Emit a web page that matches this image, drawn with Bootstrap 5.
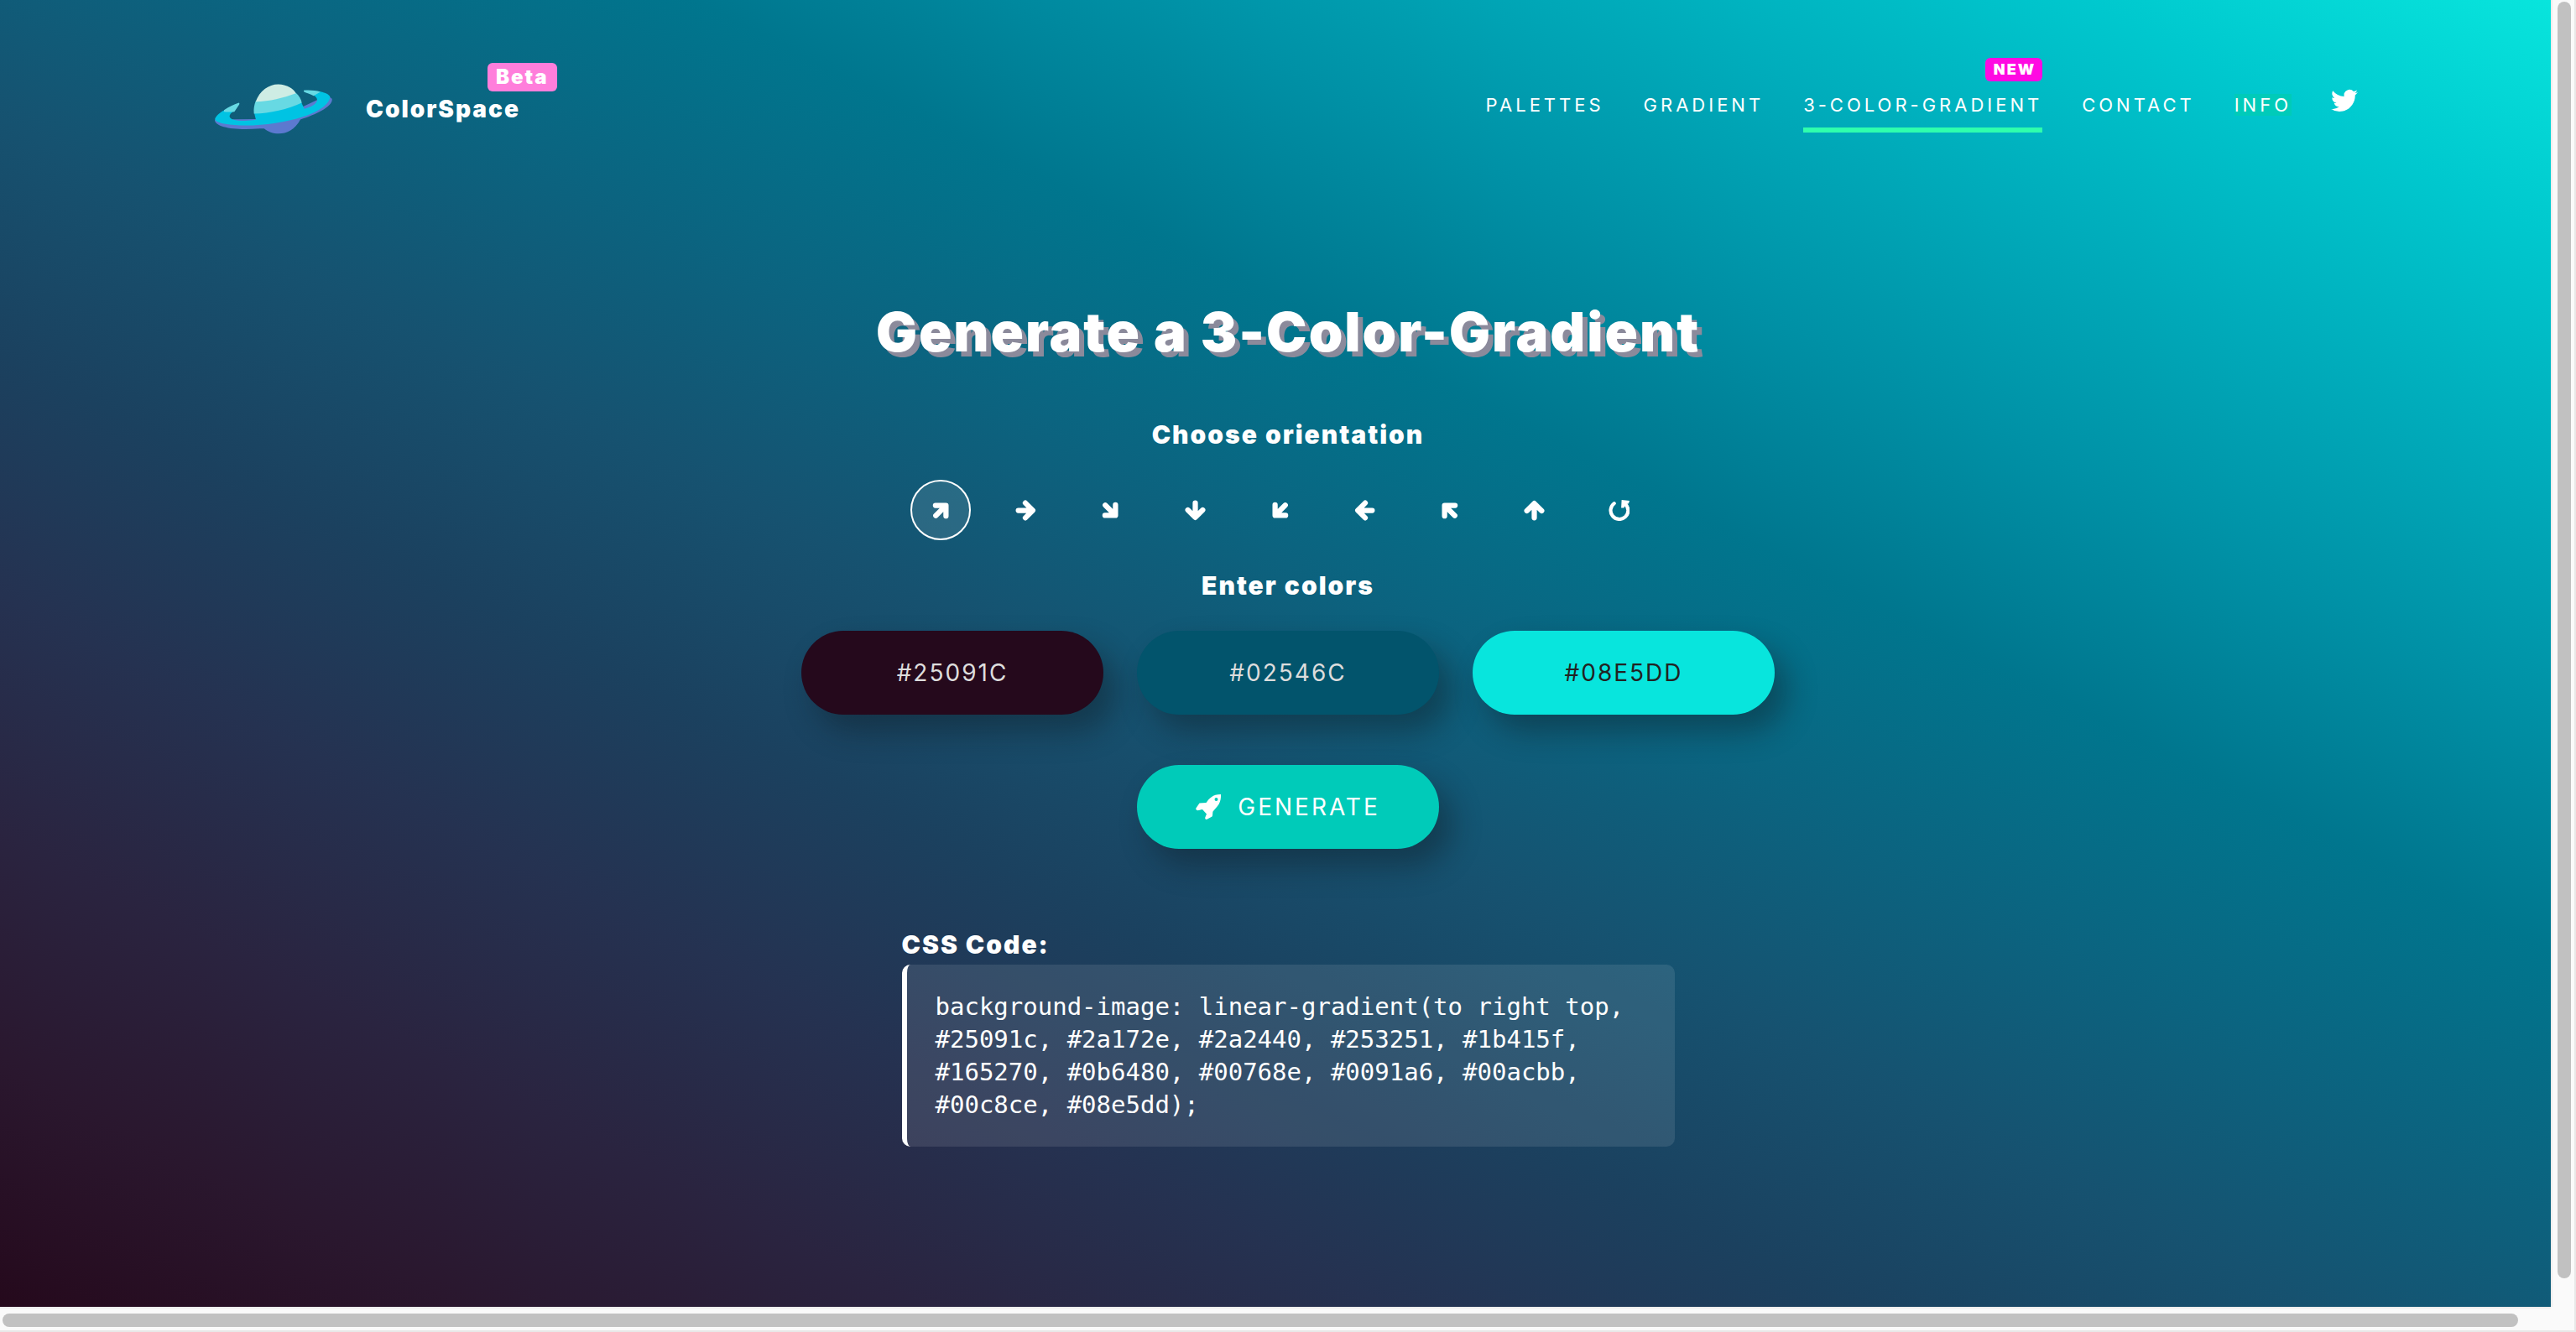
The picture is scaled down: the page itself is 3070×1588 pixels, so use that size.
<!DOCTYPE html>
<html lang="en">
<head>
<meta charset="utf-8">
<meta name="viewport" content="width=device-width, initial-scale=1">
<title>ColorSpace - 3-Color-Gradient Generator</title>
<link href="https://cdn.jsdelivr.net/npm/bootstrap@5.3.0/dist/css/bootstrap.min.css" rel="stylesheet">
<style>
body{font-family:Inter,"Open Sans",sans-serif;color:#fff;font-size:28px;letter-spacing:2px;background:#fafafa}
.frame{display:grid;grid-template:minmax(0,1fr) 30px/minmax(0,1fr) 30px;height:100vh}
.viewport{overflow:hidden;background-image:linear-gradient(to right top,#25091c,#2a172e,#2a2440,#253251,#1b415f,#165270,#0b6480,#00768e,#0091a6,#00acbb,#00c8ce,#08e5dd)}
.site{width:100vw}
.topbar{padding:100px 260px 0 256px;height:160px}
.brand{gap:40px;color:#fff;text-decoration:none;font-weight:900;line-height:40px}
.brand svg{width:140px;height:60px}
.brand .tag{left:145px;top:-35px;background:#ff7edb;border-radius:6px;font-size:24px;line-height:34px;padding:0 10px}
.menu{gap:47px;padding-top:12px;font-size:22px;letter-spacing:4px;line-height:26px}
.menu a{color:#fff;text-decoration:none}
.menu .current::after{content:"";position:absolute;left:0;right:0;top:40px;height:6px;background:#2fffad}
.menu .tag{right:0;top:-43px;background:#ff0ae2;border-radius:6px;font-size:18px;font-weight:900;letter-spacing:2px;line-height:28px;padding:0 8px 0 10px}
.menu .info{background:#00cbb9}
.menu svg{width:32px;height:26px;display:block;margin-top:-5px}
.title{font-size:65px;font-weight:900;line-height:80px;margin:196px 0 62px;text-shadow:6px 6px 0 #8b8a9b}
.sub{font-size:30px;font-weight:900;line-height:40px;margin:0}
.dirs{gap:29px;padding-right:20px;margin:34px 0}
.dir{width:72px;height:72px;border:2px solid transparent;border-radius:50%;background:none;padding:0}
.dir.on{border-color:#fff;background:rgba(255,255,255,.1)}
.dir svg{width:25px;height:25px;display:block;margin:auto}
.pill{width:360px;height:100px;border:0;border-radius:50px;text-align:center;letter-spacing:2px;box-shadow:15px 20px 35px rgba(15,20,25,.38)}
.swatches{gap:40px;margin:34px 0 60px}
.c1{background:#25091c;color:#ddd}
.c2{background:#02546c;color:#ddd}
.c3{background:#08e5dd;color:#222}
.go{background:#00cbb9;color:#fff;gap:20px;letter-spacing:3px}
.go svg{width:30px;height:30px}
.result{width:30vw;margin:94px auto 0}
.code{margin:4px 0 0;padding:31px 0 30px 34px;border-left:6px solid #fff;border-radius:10px;background:rgba(255,255,255,.1);background-clip:padding-box;font:29px/39px "DejaVu Sans Mono",monospace;letter-spacing:0;white-space:pre-wrap;overflow:hidden}
.vbar{background:#fafafa;border-left:2px solid #ececec;border-right:2px solid #e8e8e8;padding:2px 4px 34px 6px}
.hbar{background:#fafafa;border-top:2px solid #ececec;border-bottom:2px solid #e8e8e8;padding:6px 39px 4px 3px}
.nook{background:#fafafa;border-right:2px solid #e8e8e8;border-bottom:2px solid #e8e8e8}
.thumb{height:100%;background:#c1c1c1;border-radius:8px}
</style>
<script src="https://cdn.jsdelivr.net/npm/bootstrap@5.3.0/dist/js/bootstrap.bundle.min.js"></script>
</head>
<body>
<svg class="d-none" aria-hidden="true">
<symbol id="arrow" viewBox="0 0 24 24"><path d="M3.500 12H19M11.500 3.500 20 12l-8.500 8.500" fill="none" stroke="#fff" stroke-width="6" stroke-linecap="round" stroke-linejoin="round"/></symbol>
</svg>
<div class="frame">
<div class="viewport">
<div class="site">
<header class="topbar d-flex justify-content-between align-items-start">
<a class="brand d-flex align-items-center" href="#">
<svg viewBox="78 125 420 179" aria-hidden="true">
<path fill="#5c79cf" d="M78 252C76 280 150 292 240 284L254 284C285 310 350 316 384 252C440 235 502 205 497 178L480 165 300 250Z"/>
<path fill="#00c3e3" d="M79 248C85 235 100 224 113 218L146 222C128 233 126 245 140 251C160 258 200 258 225 253L219 229 387 190C390 198 395 206 398 214C425 207 440 197 444 184C444 175 440 170 430 165L455 152C475 156 486 162 490 170C489 200 440 228 390 243C330 262 250 275 170 273C110 270 76 262 79 248Z"/>
<path fill="#67d9e3" d="M111 218C128 207 145 198 164 192Q168 194 165 199L148 224Q128 226 111 224ZM396 148C415 146 438 148 456 153L431 167C420 160 405 157 396 152Z"/>
<path fill="#67d9e3" d="M224 187 368 157C380 168 387 180 389 192C340 215 275 230 218 231C216 215 219 200 224 187Z"/>
<path fill="#ceede4" d="M224 188C238 150 270 126 305 126C335 127 358 140 368 158C320 175 275 187 224 188Z"/>
</svg>
<span class="position-relative">ColorSpace<span class="tag position-absolute">Beta</span></span>
</a>
<nav class="menu d-flex" aria-label="Main">
<a href="#">PALETTES</a>
<a href="#">GRADIENT</a>
<a class="current position-relative" href="#">3-COLOR-GRADIENT<span class="tag position-absolute">NEW</span></a>
<a href="#">CONTACT</a>
<a class="info" href="#">INFO</a>
<a href="#" aria-label="Twitter"><svg viewBox="0 2 16 13" fill="#fff" overflow="visible"><path d="M5.026 15c6.038 0 9.341-5.003 9.341-9.334 0-.14 0-.282-.006-.422A6.685 6.685 0 0 0 16 3.542a6.658 6.658 0 0 1-1.889.518 3.301 3.301 0 0 0 1.447-1.817 6.533 6.533 0 0 1-2.087.793A3.286 3.286 0 0 0 7.875 6.030a9.325 9.325 0 0 1-6.767-3.429 3.289 3.289 0 0 0 1.018 4.382A3.323 3.323 0 0 1 .64 6.575v.045a3.288 3.288 0 0 0 2.632 3.218 3.203 3.203 0 0 1-.865.115 3.230 3.230 0 0 1-.614-.057 3.283 3.283 0 0 0 3.067 2.277A6.588 6.588 0 0 1 .78 13.580a6.320 6.320 0 0 1-.78-.045A9.344 9.344 0 0 0 5.026 15z"/></svg></a>
</nav>
</header>
<main class="text-center">
<h1 class="title">Generate a 3-Color-Gradient</h1>
<h2 class="sub">Choose orientation</h2>
<div class="dirs d-flex justify-content-center">
<button class="dir on" type="button" aria-label="Right top"><svg viewBox="0 0 24 24"><use href="#arrow" width="24" height="24" transform="rotate(-45 12 12)"/></svg></button>
<button class="dir" type="button" aria-label="Right"><svg viewBox="0 0 24 24"><use href="#arrow" width="24" height="24"/></svg></button>
<button class="dir" type="button" aria-label="Right bottom"><svg viewBox="0 0 24 24"><use href="#arrow" width="24" height="24" transform="rotate(45 12 12)"/></svg></button>
<button class="dir" type="button" aria-label="Bottom"><svg viewBox="0 0 24 24"><use href="#arrow" width="24" height="24" transform="rotate(90 12 12)"/></svg></button>
<button class="dir" type="button" aria-label="Left bottom"><svg viewBox="0 0 24 24"><use href="#arrow" width="24" height="24" transform="rotate(135 12 12)"/></svg></button>
<button class="dir" type="button" aria-label="Left"><svg viewBox="0 0 24 24"><use href="#arrow" width="24" height="24" transform="rotate(180 12 12)"/></svg></button>
<button class="dir" type="button" aria-label="Left top"><svg viewBox="0 0 24 24"><use href="#arrow" width="24" height="24" transform="rotate(225 12 12)"/></svg></button>
<button class="dir" type="button" aria-label="Top"><svg viewBox="0 0 24 24"><use href="#arrow" width="24" height="24" transform="rotate(270 12 12)"/></svg></button>
<button class="dir" type="button" aria-label="Radial"><svg viewBox="0 0 24 24"><path d="M6.500 4A10 10 0 1 0 19.500 5" fill="none" stroke="#fff" stroke-width="4" stroke-linecap="round"/><path d="M15 0 24 1 23 4 20 5 17.500 9 14.500 9Z" fill="#fff"/></svg></button>
</div>
<h2 class="sub">Enter colors</h2>
<form>
<div class="swatches d-flex justify-content-center">
<input class="pill c1" type="text" value="#25091C" aria-label="First color">
<input class="pill c2" type="text" value="#02546C" aria-label="Second color">
<input class="pill c3" type="text" value="#08E5DD" aria-label="Third color">
</div>
<button class="pill go d-flex align-items-center justify-content-center mx-auto" type="button"><svg viewBox="0 0 30 30" aria-hidden="true"><path fill="#fff" fill-rule="evenodd" d="M30 0C30.300 6 29 10 26 14L20.500 20.500C20 22 20.500 25 19.500 26.500L13 30C11.500 30 11 29 11.300 27.500L13 23.500 8 18C5 18.500 3 19.500 1.500 19C0 18 0 17 .7 16L4.500 10.500 12.500 10C16 5 20 0 30 0ZM24.500 4A2 2 0 1 0 24.500 8A2 2 0 1 0 24.500 4Z"/></svg><span>GENERATE</span></button>
</form>
<section class="result text-start">
<h2 class="sub">CSS Code:</h2>
<pre class="code">background-image: linear-gradient(to right top,
#25091c, #2a172e, #2a2440, #253251, #1b415f,
#165270, #0b6480, #00768e, #0091a6, #00acbb,
#00c8ce, #08e5dd);</pre>
</section>
</main>
</div>
</div>
<div class="vbar"><div class="thumb"></div></div>
<div class="hbar"><div class="thumb"></div></div>
<div class="nook"></div>
</div>
</body>
</html>
